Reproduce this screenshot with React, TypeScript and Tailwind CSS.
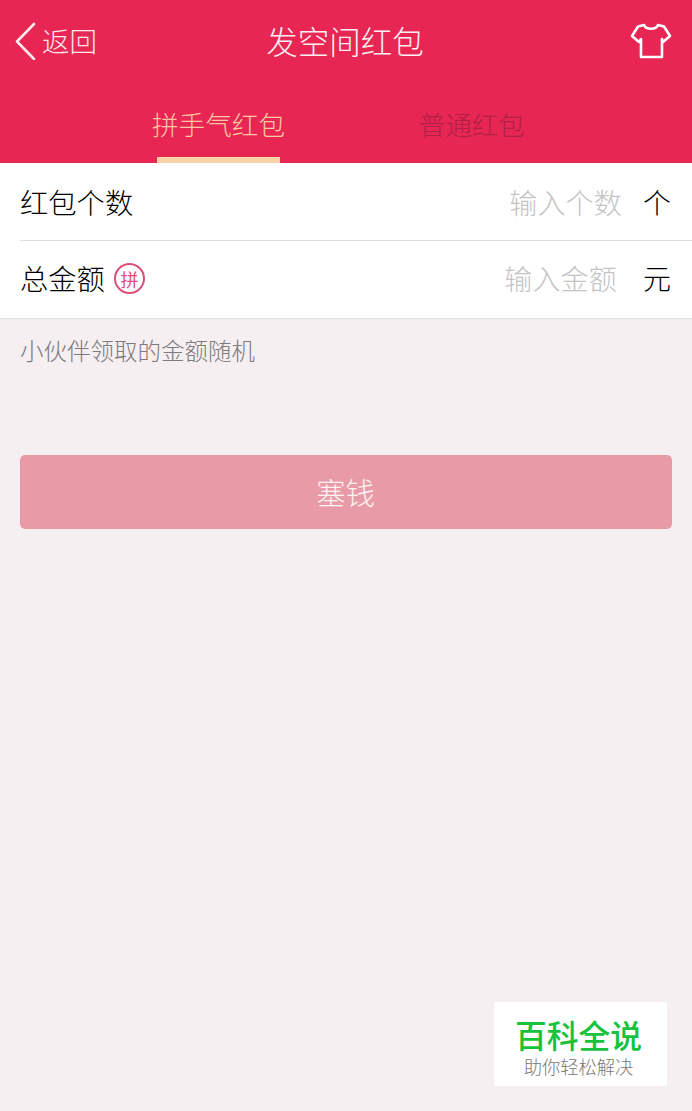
const cjk = { fontFamily: '"Noto Sans CJK SC", "Noto Sans", sans-serif' };

export default function App() {
  return (
    <div style={cjk} className="relative h-[1111px] w-[692px] overflow-hidden bg-[#f5eff1] font-normal">
      <header className="h-[163px] bg-[#e72654] text-white">
        <div className="flex h-[82px] items-center justify-between pl-[14px] pr-[20px]">
          <div className="flex w-[124px] items-center gap-[5px]">
            <svg width="23" height="38" viewBox="0 0 23 38" fill="none" stroke="#fde8ec" strokeWidth="2.6" strokeLinecap="round" strokeLinejoin="round">
              <path d="M20 2 L3 19.5 L20 37" />
            </svg>
            <span className="text-[27.5px] font-light leading-none text-[#fde8ec]">返回</span>
          </div>
          <h1 className="text-[31.5px] font-light leading-none text-[#fdeef1]">发空间红包</h1>
          <div className="flex w-[120px] justify-end">
            <svg width="42" height="36" viewBox="0 0 42 36" fill="none" stroke="#ffffff" strokeWidth="2.6" strokeLinejoin="round">
              <path d="M14 2 C16 7 26 7 28 2 L34 3.5 L40 13 L33 19 L32 16 L32 34 L11 34 L11 16 L9 19 L2 13 L8 3.5 Z" />
            </svg>
          </div>
        </div>
        <div className="flex h-[81px]">
          <div className="ml-[152px] flex w-[133px] flex-col items-center">
            <span className="mt-[17px] h-[58px] whitespace-nowrap text-[26.6px] font-light leading-[50px] text-[#fbc6a2]">拼手气红包</span>
            <div className="h-[6px] w-[123px] bg-[#fbd3a8]" />
          </div>
          <span className="ml-[134px] mt-[17px] whitespace-nowrap text-[26.4px] font-light leading-[50px] text-[#b11f46]">普通红包</span>
        </div>
      </header>

      <section className="bg-white">
        <div className="ml-[20px] flex h-[78px] items-center justify-between border-b border-[#dedede] pr-[21px] pt-[1px]">
          <span className="text-[28.3px] font-light leading-none text-[#000000]">红包个数</span>
          <div className="flex items-center">
            <span className="text-[28.2px] font-light leading-none text-[#c4c4c4]">输入个数</span>
            <span className="ml-[21px] text-[28px] font-light leading-none text-[#000000]">个</span>
          </div>
        </div>
        <div className="flex h-[78px] items-center justify-between border-b border-[#dedede] pb-[2px] pl-[20px] pr-[21px]">
          <div className="flex items-center gap-[9px]">
            <span className="text-[28.3px] font-light leading-none text-[#000000]">总金额</span>
            <span className="flex h-[31px] w-[31px] items-center justify-center rounded-full border-2 border-[#dc4f77] text-[18px] leading-none text-[#dc4f77]">拼</span>
          </div>
          <div className="flex items-center">
            <span className="text-[28.2px] font-light leading-none text-[#c4c4c4]">输入金额</span>
            <span className="ml-[26px] text-[28px] font-light leading-none text-[#000000]">元</span>
          </div>
        </div>
      </section>

      <p className="ml-[20px] mt-[18px] text-[23.5px] font-light leading-[26px] text-[#7d7a7b]">小伙伴领取的金额随机</p>

      <button className="mx-[20px] mt-[92px] flex h-[74px] w-[652px] items-center justify-center rounded-[5px] bg-[#e89ba6] pr-[1px] text-[29.3px] font-light text-[#fdf3f3]">
        塞钱
      </button>

      <div className="absolute left-[494px] top-[1002px] flex h-[84px] w-[173px] flex-col items-center bg-white pr-[4px] pt-[13px]">
        <span className="text-[31.8px] font-medium leading-[38px] text-[#17c33c]">百科全说</span>
        <span className="text-[18.3px] font-light leading-[26px] text-[#777777]">助你轻松解决</span>
      </div>
    </div>
  );
}
